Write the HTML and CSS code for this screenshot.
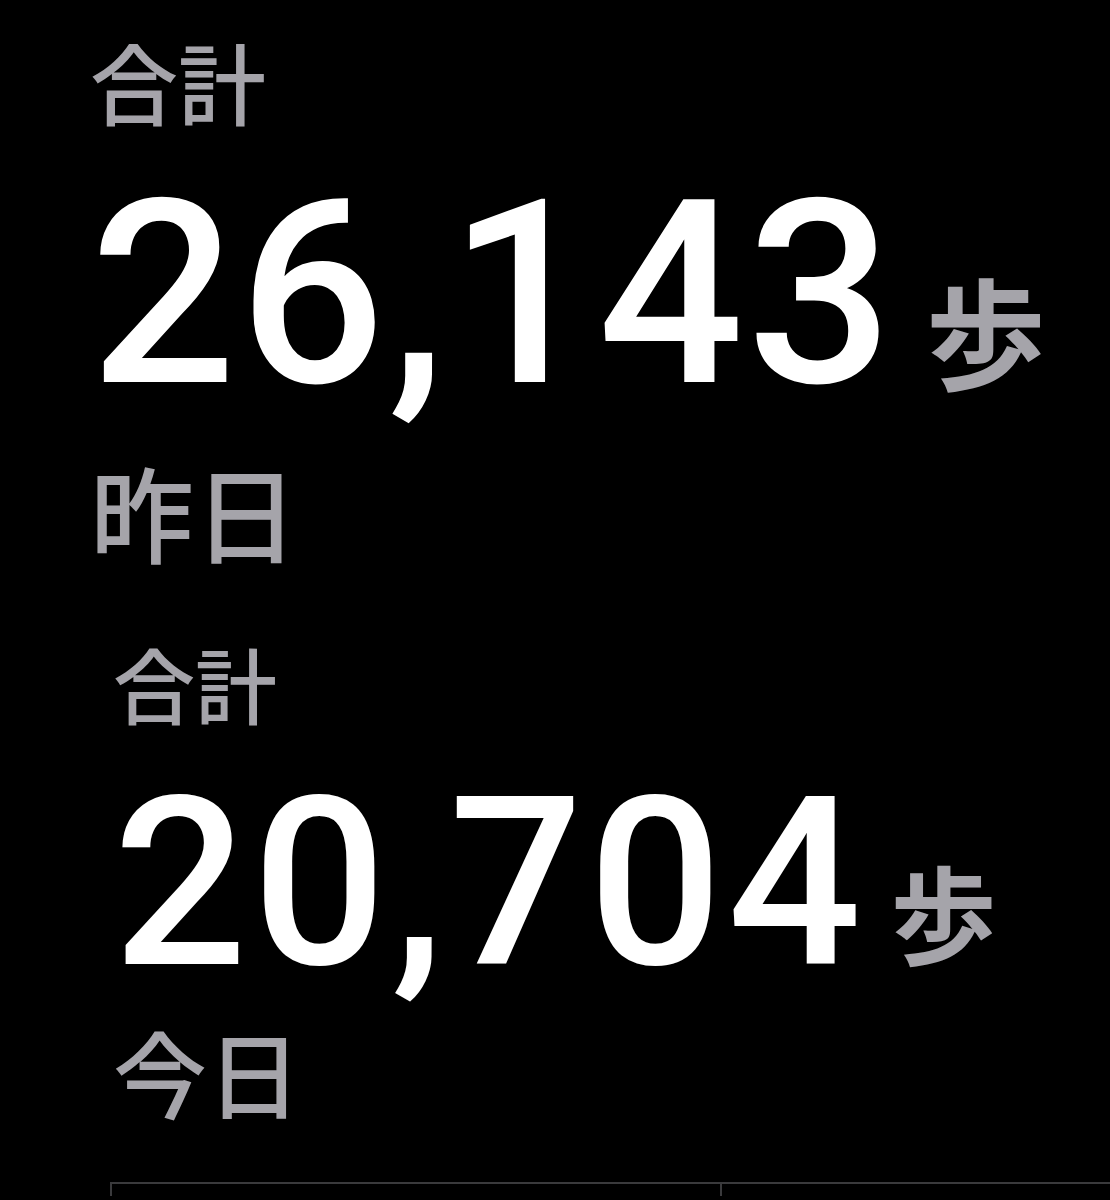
FILE: index.html
```html
<!doctype html>
<html>
<head>
<meta charset="utf-8">
<link rel="stylesheet" href="styles.css">
<title>歩数</title>
</head>
<body>
<div class="day day-yesterday">
    <div class="caption">合計</div>
    <div class="total"><span class="value">26,143</span><span class="unit">歩</span></div>
    <div class="date">昨日</div>
</div>
<div class="day day-today">
    <div class="caption">合計</div>
    <div class="total"><span class="value">20,704</span><span class="unit">歩</span></div>
    <div class="date">今日</div>
</div>
<div class="chart-axis">
    <span class="tick"></span>
    <span class="tick tick-last"></span>
</div>
</body>
</html>
```

FILE: styles.css
```css
html,
body {
    margin: 0;
    padding: 0;
    background-color: #000;
}
body {
    width: 1110px;
    height: 1200px;
    overflow: hidden;
    font-family: "Noto Sans CJK JP", "Noto Sans", sans-serif;
    color: #a5a4aa;
}
.day {
    display: flex;
    flex-direction: column;
    align-items: flex-start;
}
.caption,
.date {
    line-height: 1;
    font-weight: 500;
}
.unit {
    line-height: 1;
    font-weight: 700;
}
.total {
    display: flex;
    align-items: flex-end;
    line-height: 1;
}
.value {
    font-family: Roboto, "Liberation Sans", sans-serif;
    font-weight: 500;
    color: #fff;
}

/* upper block, a touch larger */
.day-yesterday {
    padding: 36px 0 0 90px;
}
.day-yesterday .caption {
    font-size: 88px;
}
.day-yesterday .total {
    margin-top: 42px;
}
.day-yesterday .value {
    font-size: 257px;
    letter-spacing: 3px;
}
.day-yesterday .unit {
    font-size: 120px;
    margin: 0 0 34px 30px;
}
.day-yesterday .date {
    font-size: 104px;
    margin-top: 36px;
}

/* lower block */
.day-today {
    padding: 79px 0 0 113px;
}
.day-today .caption {
    font-size: 82px;
}
.day-today .total {
    margin-top: 42px;
}
.day-today .value {
    font-size: 236px;
    letter-spacing: 5px;
}
.day-today .unit {
    font-size: 106px;
    margin: 0 0 39px 24px;
}
.day-today .date {
    font-size: 94px;
    margin-top: 22px;
}

.chart-axis {
    display: flex;
    margin: 64px 0 0 110px;
    height: 12px;
    border-top: 2px solid #3a3a3c;
}
.tick {
    flex: 0 0 608px;
    border-left: 2px solid #3a3a3c;
}
.tick-last {
    flex: 1 1 auto;
    min-width: 0;
}
```
